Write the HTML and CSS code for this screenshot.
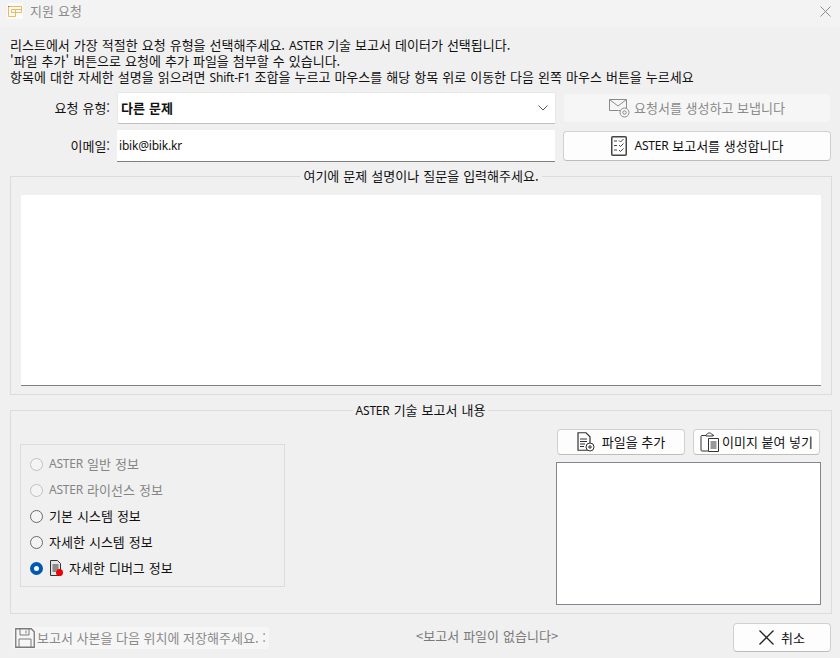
FILE: index.html
```html
<!DOCTYPE html>
<html lang="ko">
<head>
<meta charset="utf-8">
<title>지원 요청</title>
<link rel="stylesheet" href="styles.css">
</head>
<body>
<div class="window">
  <header class="titlebar">
    <div class="app-icon">
      <svg width="16" height="16" viewBox="0 0 16 16"><path d="M1 3.500h1.500" stroke="#333" fill="none"/><path d="M2.500 3.500h12v6h-6v-3h6M1.500 3.500v10h7v-7h-4v3h4" stroke="#f0b85a" fill="none"/></svg>
    </div>
    <span class="title">지원 요청</span>
    <svg class="close" width="11" height="11" viewBox="0 0 11 11"><path d="M.5.500l10 10M10.500.500l-10 10" stroke="#8c8c8c" fill="none"/></svg>
  </header>
  <main class="content">
    <div class="intro">
      <p>리스트에서 가장 적절한 요청 유형을 선택해주세요. <span class="lat">ASTER</span> 기술 보고서 데이터가 선택됩니다.</p>
      <p>'파일 추가' 버튼으로 요청에 추가 파일을 첨부할 수 있습니다.</p>
      <p>항목에 대한 자세한 설명을 읽으려면 <span class="lat">Shift-F1</span> 조합을 누르고 마우스를 해당 항목 위로 이동한 다음 왼쪽 마우스 버튼을 누르세요</p>
    </div>
    <div class="form-grid">
      <label class="field-label">요청 유형:</label>
      <div class="combo"><b>다른 문제</b>
        <svg width="10" height="6" viewBox="0 0 10 6"><path d="M.5.500l4.500 4.500 4.500-4.500" stroke="#555" fill="none"/></svg>
      </div>
      <button class="btn disabled send">
        <svg width="21" height="19" viewBox="0 0 21 19"><path d="M.5.500h17v11h-8M.5.500v11h9M.5.500l8.500 6.500 8.500-6.500" stroke="#8a8a8a" fill="none"/><circle cx="15.500" cy="13.500" r="4.500" fill="#f6f6f6" stroke="#8a8a8a"/><circle cx="15.500" cy="13.500" r="1.700" fill="none" stroke="#8a8a8a"/></svg>
        요청서를 생성하고 보냅니다
      </button>
      <label class="field-label">이메일:</label>
      <div class="email"><span class="lat">ibik@ibik.kr</span></div>
      <button class="btn generate">
        <svg width="16" height="20" viewBox="0 0 16 20"><rect x=".75" y=".75" width="14.500" height="18.500" rx="1" fill="none" stroke="#444" stroke-width="1.500"/><path d="M3 5h3M3 9.500h3M3 14h3M8 4.500l1.500 1.500 3-3M8 9l1.500 1.500 3-3M8 14l1.500 1.500 3-3" fill="none" stroke="#444"/></svg>
        <span class="lat">ASTER</span>&nbsp;보고서를 생성합니다
      </button>
    </div>
    <fieldset class="group description">
      <legend>여기에 문제 설명이나 질문을 입력해주세요.</legend>
      <div class="memo"></div>
    </fieldset>
    <fieldset class="group report">
      <legend><span class="lat">ASTER</span> 기술 보고서 내용</legend>
      <div class="report-body">
        <div class="options">
          <label class="opt off"><i class="radio"></i><span class="lat">ASTER</span>&nbsp;일반 정보</label>
          <label class="opt off"><i class="radio"></i><span class="lat">ASTER</span>&nbsp;라이선스 정보</label>
          <label class="opt"><i class="radio"></i>기본 시스템 정보</label>
          <label class="opt"><i class="radio"></i>자세한 시스템 정보</label>
          <label class="opt"><i class="radio on"></i>
            <svg class="doc" width="15" height="17" viewBox="0 0 15 17"><path d="M1.500.500h7l3 3v12h-10z" fill="#e4e4e4" stroke="#333"/><path d="M3.500 5h6M3.500 7h6M3.500 9h6M3.500 11h4" stroke="#333"/><circle cx="10.500" cy="12.500" r="3.500" fill="#f00000"/></svg>
            자세한 디버그 정보</label>
        </div>
        <div class="files">
          <div class="file-buttons">
            <button class="btn small">
              <svg width="18" height="20" viewBox="0 0 18 20"><path d="M1 .750h8l4 4v13.500h-12z" fill="none" stroke="#333" stroke-width="1.200"/><path d="M3 7h7M3 9.500h7M3 12h5M3 14.500h4" stroke="#333"/><circle cx="13" cy="15" r="4" fill="#fff" stroke="#333"/><path d="M11 15h4M13 13v4" stroke="#333"/></svg>
              <span>파일을 추가</span>
            </button>
            <button class="btn small paste">
              <svg width="20" height="20" viewBox="0 0 20 20"><path d="M6 3.500h-4a1 1 0 0 0-1 1v13.500a1 1 0 0 0 1 1h6M14 3.500h-1M6 3.500c0-1.500 1-1 1.500-1.500s0-1 2-1 1 .5 2 1 1.500 0 1.500 2h-7z" fill="none" stroke="#333"/><path d="M8.500 6.500h10v13h-10z" fill="#fff" stroke="#333"/><path d="M10.500 10h6M10.500 12h6M10.500 14h6M10.500 16h6" stroke="#333"/></svg>
              <span>이미지 붙여 넣기</span>
            </button>
          </div>
          <div class="filelist"></div>
        </div>
      </div>
    </fieldset>
    <footer class="bottom">
      <button class="btn disabled save">
        <svg width="20" height="20" viewBox="0 0 20 20"><path d="M.750.750h15.500l3 3v15.500h-18.500z" fill="none" stroke="#7a7a7a" stroke-width="1.300"/><path d="M5 1v6h9v-6M11 2.500v3M4 19v-8h12v8" fill="none" stroke="#7a7a7a"/></svg>
        보고서 사본을 다음 위치에 저장해주세요. :
      </button>
      <span class="nofile">&lt;보고서 파일이 없습니다&gt;</span>
      <button class="btn cancel">
        <svg width="15" height="15" viewBox="0 0 15 15"><path d="M.5.500l14 14M14.500.500l-14 14" stroke="#222" stroke-width="1.300" fill="none"/></svg>
        취소
      </button>
    </footer>
  </main>
</div>
</body>
</html>
```
FILE: styles.css
```css
* { box-sizing: border-box; }
html, body { margin: 0; padding: 0; }
body {
  width: 840px;
  height: 658px;
  overflow: hidden;
  background: #f0f0f0;
  color: #111;
  font: 13px/16px "Noto Sans CJK KR", "Noto Sans", sans-serif;
  word-spacing: .4px;
}
.lat { font: 12px/1 "Noto Sans", sans-serif; letter-spacing: -.2px; word-spacing: 0; }
.window { height: 658px; display: flex; flex-direction: column; }
.titlebar {
  height: 27px;
  flex: none;
  display: flex;
  align-items: center;
  background: #f3f3f3;
  padding: 0 9px 4px 7px;
  border-bottom: 1px solid #f1f1f1;
}
.app-icon { width: 16px; height: 16px; background: #fbfbfb; border-radius: 2px; }
.app-icon svg { display: block; }
.title { margin-left: 7px; font-size: 13px; color: #8b8b8b; }
.close { margin-left: auto; }
.content { flex: 1; padding: 10px 8px 0 10px; display: flex; flex-direction: column; }
.intro p { margin: 0; height: 16px; white-space: nowrap; }
.form-grid {
  margin-top: 7px;
  margin-right: 1px;
  display: grid;
  grid-template-columns: 100px 439px 268px;
  grid-template-rows: 32px 32px;
  column-gap: 7px;
  row-gap: 6px;
  align-items: center;
}
.field-label { text-align: right; }
.combo, .email { height: 32px; background: #fff; display: flex; align-items: center; }
.combo {
  justify-content: space-between;
  padding: 0 7px 1px 3px;
  border: 1px solid #e8e8e8;
  border-bottom: 1px solid #c0c0c0;
  border-radius: 2px;
}
.email { padding: 1px 0 0 2px; width: 438px; border-bottom: 1px solid #808080; }
.btn {
  display: flex;
  align-items: center;
  justify-content: center;
  background: #fdfdfd;
  border: 1px solid #d0d0d0;
  border-bottom-color: #bdbdbd;
  border-radius: 4px;
  font: inherit;
  color: #111;
  padding: 0;
  white-space: nowrap;
}
.form-grid .btn { height: 30px; }
.btn.disabled { background: #f6f6f6; border-color: #f0f0f0; color: #8a8a8a; }
.send svg { margin-right: 4px; margin-top: 1px; }
.generate svg { margin-right: 8px; }
.group {
  margin: 0;
  padding: 0;
  border: 1px solid #dcdcdc;
  min-width: 0;
}
.group legend { margin: 0 auto; padding: 0 3px; line-height: 16px; }
.description { margin-top: 6px; height: 227px; padding: 11px 10px 8px; }
.memo { height: 191px; background: #fff; border-bottom: 1px solid #808080; }
.report { margin-top: 7px; height: 212px; padding: 8px 10px 8px 9px; }
.report-body { display: flex; justify-content: space-between; }
.options {
  width: 265px;
  height: 143px;
  margin-top: 18px;
  padding: 6px 9px;
  border: 1px solid #dcdcdc;
  display: flex;
  flex-direction: column;
}
.opt { height: 26px; flex: none; display: flex; align-items: center; color: #111; }
.opt.off { color: #858585; }
.radio {
  width: 13px;
  height: 13px;
  margin-right: 6px;
  border-radius: 50%;
  border: 1px solid #6a6a6a;
  background: #f4f4f4;
  flex: none;
}
.off .radio { border-color: #c0c0c0; }
.radio.on { border: 4px solid #0058b0; background: #fff; }
.doc { margin-right: 5px; }
.files { width: 265px; display: flex; flex-direction: column; }
.file-buttons { display: flex; gap: 8px; margin-left: 1px; height: 26px; margin-top: 3px; }
.btn.small { width: 128px; height: 26px; }
.btn.small.paste { width: 127px; }
.small svg { margin-right: 7px; }
.paste svg { margin-right: 2px; }
.filelist { margin-top: 7px; height: 143px; background: #fff; border: 1px solid #85858f; }
.bottom { display: flex; align-items: center; height: 44px; }
.save { width: 258px; height: 24px; margin-left: 2px; margin-top: 3px; justify-content: flex-start; padding-left: 2px; }
.save svg { margin-right: 2px; flex: none; }
.nofile { margin-left: 146px; color: #7a7a7a; white-space: nowrap; }
.cancel { width: 98px; height: 29px; margin-left: auto; margin-right: 1px; margin-top: 3px; }
.cancel svg { margin-right: 7px; }
```
